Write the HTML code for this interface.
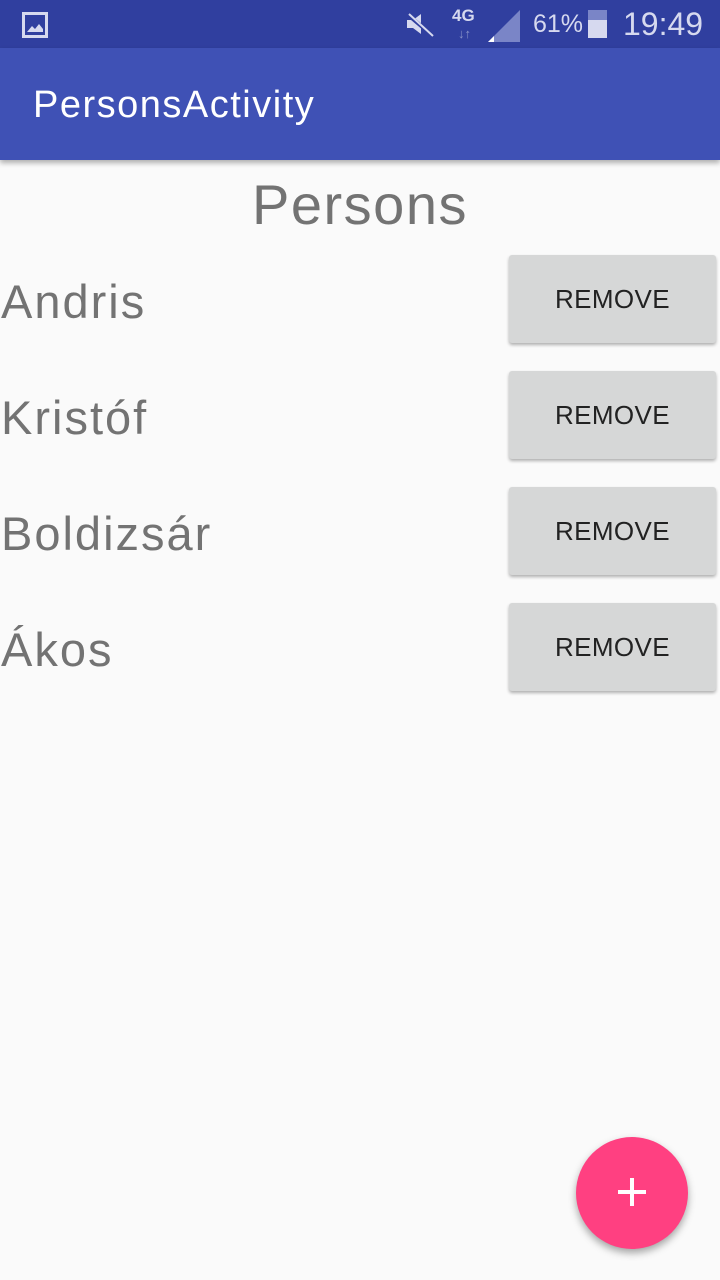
<!DOCTYPE html>
<html><head><meta charset="utf-8"><style>
body{margin:0;width:720px;height:1280px;background:#fafafa;font-family:"Liberation Sans",sans-serif;position:relative;overflow:hidden}
.sb{position:absolute;top:0;left:0;width:720px;height:48px;background:#303f9f;color:#d6d9ef}
.ab{position:absolute;top:48px;left:0;width:720px;height:112px;background:#3f51b5;box-shadow:0 3px 5px rgba(0,0,0,.3)}
.ab span{position:absolute;left:33px;top:36px;color:#fff;font-size:38px;letter-spacing:1.5px}
.title{position:absolute;top:172px;width:720px;text-align:center;font-size:56px;color:#737373;letter-spacing:1.5px}
.name{position:absolute;left:1px;font-size:47px;color:#737373;letter-spacing:2px}
.btn{position:absolute;left:509px;width:207px;height:88px;background:#d6d7d7;border-radius:3px;box-shadow:0 2px 3px rgba(0,0,0,.3);text-align:center;line-height:88px;font-size:26px;color:#222;letter-spacing:0.4px}
.fab{position:absolute;left:576px;top:1137px;width:112px;height:112px;border-radius:50%;background:#ff4081;box-shadow:0 4px 8px rgba(0,0,0,.35)}
.fab i{position:absolute;background:#fff}
</style></head><body>
<div class="sb">
<div style="position:absolute;left:22px;top:12px;width:26px;height:26px;border:3px solid #d6d9ef;box-sizing:border-box"></div>
<svg style="position:absolute;left:27px;top:20px" width="16" height="12"><path d="M0 12L5 6 8 9 12 4 16 9V12z" fill="#d6d9ef"/></svg>
<svg style="position:absolute;left:405px;top:12px" width="30" height="26"><path d="M2 8h6l8-6v20l-8-6H2z" fill="#d6d9ef"/><path d="M2 2l26 22" stroke="#303f9f" stroke-width="4"/><path d="M4 2l24 22" stroke="#d6d9ef" stroke-width="2"/></svg>
<div style="position:absolute;left:452px;top:6px;font-size:17px;font-weight:bold">4G</div>
<div style="position:absolute;left:458px;top:26px;font-size:13px;color:#8a93c8">↓↑</div>
<svg style="position:absolute;left:488px;top:10px" width="34" height="32"><path d="M0 32L32 0V32z" fill="#7a85c7"/><path d="M0 32L6 26V32z" fill="#fff"/></svg>
<div style="position:absolute;left:533px;top:10px;font-size:25px">61%</div>
<div style="position:absolute;left:588px;top:10px;width:19px;height:28px;background:#7a85c7"></div>
<div style="position:absolute;left:588px;top:20px;width:19px;height:18px;background:#d6d9ef"></div>
<div style="position:absolute;left:623px;top:6px;font-size:32px">19:49</div>
</div>
<div class="ab"><span>PersonsActivity</span></div>
<div class="title">Persons</div>
<div class="name" style="top:274px">Andris</div><div class="btn" style="top:255px">REMOVE</div>
<div class="name" style="top:390px">Kristóf</div><div class="btn" style="top:371px">REMOVE</div>
<div class="name" style="top:506px">Boldizsár</div><div class="btn" style="top:487px">REMOVE</div>
<div class="name" style="top:622px">Ákos</div><div class="btn" style="top:603px">REMOVE</div>
<div class="fab"><i style="left:42px;top:53px;width:28px;height:4px"></i><i style="left:54px;top:41px;width:4px;height:28px"></i></div>
</body></html>
